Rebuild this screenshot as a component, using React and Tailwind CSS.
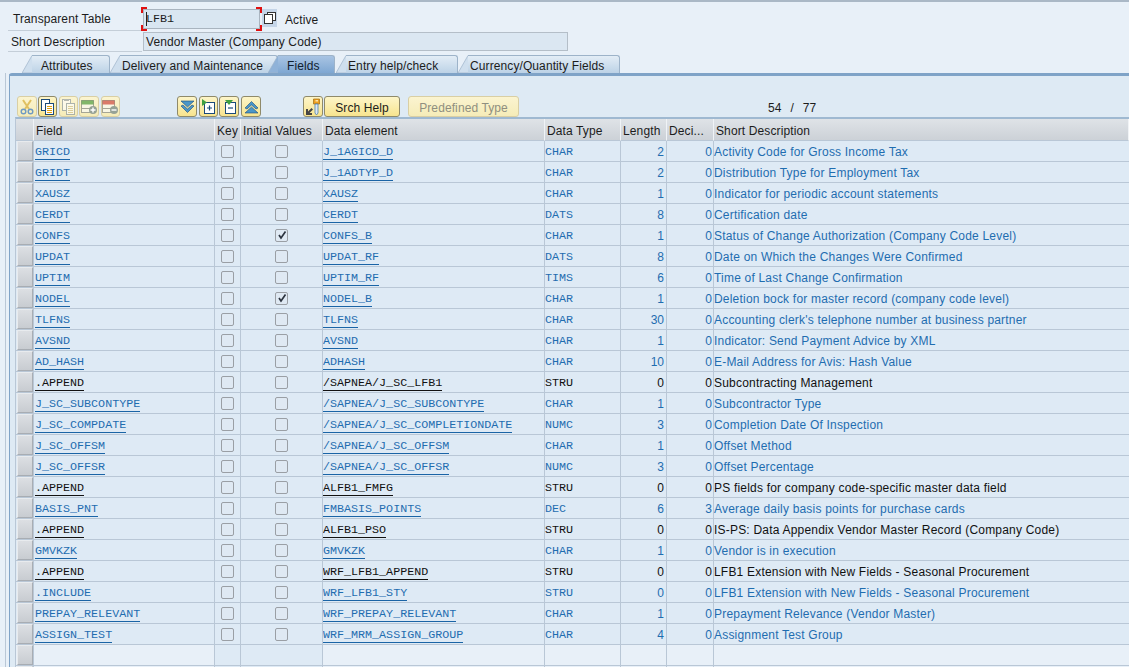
import React from "react";

const rows = [
  ["GRICD","J_1AGICD_D","CHAR","2","0","Activity Code for Gross Income Tax"],
  ["GRIDT","J_1ADTYP_D","CHAR","2","0","Distribution Type for Employment Tax"],
  ["XAUSZ","XAUSZ","CHAR","1","0","Indicator for periodic account statements"],
  ["CERDT","CERDT","DATS","8","0","Certification date"],
  ["CONFS","CONFS_B","CHAR","1","0","Status of Change Authorization (Company Code Level)",0,1],
  ["UPDAT","UPDAT_RF","DATS","8","0","Date on Which the Changes Were Confirmed"],
  ["UPTIM","UPTIM_RF","TIMS","6","0","Time of Last Change Confirmation"],
  ["NODEL","NODEL_B","CHAR","1","0","Deletion bock for master record (company code level)",0,1],
  ["TLFNS","TLFNS","CHAR","30","0","Accounting clerk's telephone number at business partner"],
  ["AVSND","AVSND","CHAR","1","0","Indicator: Send Payment Advice by XML"],
  ["AD_HASH","ADHASH","CHAR","10","0","E-Mail Address for Avis: Hash Value"],
  [".APPEND","/SAPNEA/J_SC_LFB1","STRU","0","0","Subcontracting Management",1],
  ["J_SC_SUBCONTYPE","/SAPNEA/J_SC_SUBCONTYPE","CHAR","1","0","Subcontractor Type"],
  ["J_SC_COMPDATE","/SAPNEA/J_SC_COMPLETIONDATE","NUMC","3","0","Completion Date Of Inspection"],
  ["J_SC_OFFSM","/SAPNEA/J_SC_OFFSM","CHAR","1","0","Offset Method"],
  ["J_SC_OFFSR","/SAPNEA/J_SC_OFFSR","NUMC","3","0","Offset Percentage"],
  [".APPEND","ALFB1_FMFG","STRU","0","0","PS fields for company code-specific master data field",1],
  ["BASIS_PNT","FMBASIS_POINTS","DEC","6","3","Average daily basis points for purchase cards"],
  [".APPEND","ALFB1_PSO","STRU","0","0","IS-PS: Data Appendix Vendor Master Record (Company Code)",1],
  ["GMVKZK","GMVKZK","CHAR","1","0","Vendor is in execution"],
  [".APPEND","WRF_LFB1_APPEND","STRU","0","0","LFB1 Extension with New Fields - Seasonal Procurement",1],
  [".INCLUDE","WRF_LFB1_STY","STRU","0","0","LFB1 Extension with New Fields - Seasonal Procurement",2],
  ["PREPAY_RELEVANT","WRF_PREPAY_RELEVANT","CHAR","1","0","Prepayment Relevance (Vendor Master)"],
  ["ASSIGN_TEST","WRF_MRM_ASSIGN_GROUP","CHAR","4","0","Assignment Test Group"],
];

const mono = "font-['Liberation_Mono',monospace] text-[11.7px] pt-[4px]";
const sansPad = "pt-[2px]";
const cols = "grid grid-cols-[18px_181px_26px_82px_222px_76px_46px_47px_1fr]";
const cell = "border-r border-[#b9c7d6] h-full flex items-center overflow-hidden whitespace-nowrap";

function Check({ on }) {
  return (
    <span className="w-[13px] h-[13px] rounded-[2px] border border-[#9a9fa5] bg-[#dfe9f3] flex items-center justify-center">
      {on ? (
        <svg width="10" height="10" viewBox="0 0 10 10">
          <path d="M2 5 L4 8 L8.5 1.5" fill="none" stroke="#2c3440" strokeWidth="1.7" />
        </svg>
      ) : null}
    </span>
  );
}

function Selector() {
  return (
    <div className="h-full border-r border-[#b9c7d6] pl-px">
      <div className="h-[20px] bg-gradient-to-b from-[#dcdfe3] to-[#c8ccd1] border border-[#e8ebee] border-r-[#a8adb3] border-b-[#a8adb3]" />
    </div>
  );
}

function Row({ r }) {
  const [f, de, t, l, d, s, kind, chk] = r;
  const black = kind === 1;
  const c = black ? "text-[#111]" : "text-[#1f6db0]";
  const u = black ? "border-[#111]" : "border-[#1a64a6]";
  return (
    <div className={`${cols} h-[21px] border-b border-[#b9c7d6] bg-[#deeaf5]`}>
      <Selector />
      <div className={`${cell} pl-px ${mono} ${c}`}>
        <span className={`border-b leading-[13px] ${u}`}>{f}</span>
      </div>
      <div className={`${cell} justify-center`}><Check /></div>
      <div className={`${cell} justify-center`}><Check on={chk} /></div>
      <div className={`${cell} ${mono} ${c}`}>
        <span className={`border-b leading-[13px] ${u}`}>{de}</span>
      </div>
      <div className={`${cell} ${mono} ${c}`}>{t}</div>
      <div className={`${cell} justify-end pr-[2px] ${sansPad} ${c}`}>{l}</div>
      <div className={`${cell} justify-end pr-px ${sansPad} ${c}`}>{d}</div>
      <div className={`h-full flex items-center whitespace-nowrap text-[12px] tracking-[0.2px] ${sansPad} ${c}`}>{s}</div>
    </div>
  );
}

function EmptyRow() {
  return (
    <div className={`${cols} h-[21px] border-b border-[#b9c7d6] bg-[#e8f0f8]`}>
      <Selector />
      <div className={cell} />
      <div className={`${cell} bg-[#deeaf5]`} />
      <div className={`${cell} bg-[#deeaf5]`} />
      <div className={cell} />
      <div className={cell} />
      <div className={cell} />
      <div className={cell} />
      <div />
    </div>
  );
}

function HeadCell({ children }) {
  return (
    <div className="h-full flex items-center pl-[2px] pt-[2px] whitespace-nowrap overflow-hidden text-[12px] tracking-[0.12px] text-[#1c1c1c] bg-gradient-to-b from-[#dfe3e7] to-[#ccd1d7] border-r border-[#f0f3f6] border-b border-b-[#b9c7d6]">
      {children}
    </div>
  );
}

function Slant({ active }) {
  return (
    <svg width="11" height="18" viewBox="0 0 11 18" className="-mr-px shrink-0">
      <path d="M0 18 L10 0.5 L11 0.5 L11 18 Z" fill={active ? "#8fb2d8" : "#cfdfee"} stroke="#9db3c9" strokeWidth="0.7" />
    </svg>
  );
}

function Tab({ label, active, w, ml = "" }) {
  return (
    <div className={`flex items-end h-[18px] ${ml}`}>
      <Slant active={active} />
      <div
        className={`h-[18px] ${w} flex items-center pt-[2px] rounded-tr-[3px] border-t border-r border-[#9db3c9] text-[12px] tracking-[0.1px] ${
          active ? "bg-gradient-to-b from-[#a9c4e3] to-[#7ea7d2] text-[#10202f]" : "bg-gradient-to-b from-[#e3edf6] to-[#bcd2e6] text-[#1c1c1c]"
        }`}
      >
        {label}
      </div>
    </div>
  );
}

function TB({ children, dim, className }) {
  return (
    <div className={`h-[21px] ${className} shrink-0 flex items-center justify-center rounded-[3px] border bg-gradient-to-b text-[12px] tracking-[0.1px] ${dim ? "border-[#d9cfa4] from-[#fbf4d0] to-[#f5ecb8]" : "border-[#8f8a6a] from-[#fdf5c8] to-[#f7e48e]"}`}>
      {children}
    </div>
  );
}

const Doc = ({ stroke = "#1a4a7a", line = "#e0a010", dim }) => (
  <svg width="15" height="16" viewBox="0 0 15 16" opacity={dim ? 0.6 : 1}>
    <rect x="1.5" y="0.5" width="8" height="11" fill="#fff" stroke={stroke} />
    {dim ? <rect x="3" y="0" width="5" height="2" fill="#8a94a0" /> : null}
    <rect x="5.5" y="4.5" width="8" height="11" fill="#fff" stroke={stroke} />
    <path d="M7 7.5h5M7 9.5h5M7 11.5h5M7 13.5h5" stroke={line} />
  </svg>
);

const RowAdd = ({ color, sign }) => (
  <svg width="17" height="16" viewBox="0 0 17 16">
    <rect x="0.5" y="1.5" width="12" height="12" fill="#f8f6e4" stroke="#a5a595" />
    <rect x="0.5" y="1.5" width="12" height="4" fill={color} opacity="0.75" />
    <path d="M1 9.5h8" stroke="#a5a595" />
    <circle cx="12" cy="11" r="4" fill="#96a296" />
    <path d={sign} stroke="#fff" strokeWidth="1.4" />
  </svg>
);

export default function App() {
  return (
    <div className="w-[1129px] h-[667px] overflow-hidden bg-[#e8f0f8] font-['Liberation_Sans',sans-serif] text-[12px] text-[#1c1c1c] border-t-2 border-[#aab8c6] flex flex-col">
      <div className="pl-[8px] pt-[7px] flex flex-col">
        <div className="flex items-start h-[22px]">
          <div className="w-[134px] h-[22px] pl-[5px] pb-[2px] flex items-center border-b border-[#c4ced8] tracking-[0.1px]">Transparent Table</div>
          <div className="relative ml-px w-[117px] h-[20px] pl-[2px] pt-[2px] flex items-center bg-[#d9e6f1] border border-[#a9b4bf] font-['Liberation_Mono',monospace] text-[11.7px]">
            LFB1
            <span className="absolute left-[2px] top-[2px] w-px h-[14px] bg-[#222]" />
            <span className="absolute -left-[3px] -top-[3px] w-[6px] h-[6px] border-l-2 border-t-2 border-[#e01010]" />
            <span className="absolute -right-[3px] -top-[3px] w-[6px] h-[6px] border-r-2 border-t-2 border-[#e01010]" />
            <span className="absolute -left-[3px] -bottom-[3px] w-[6px] h-[6px] border-l-2 border-b-2 border-[#e01010]" />
            <span className="absolute -right-[3px] -bottom-[3px] w-[6px] h-[6px] border-r-2 border-b-2 border-[#e01010]" />
          </div>
          <div className="w-[15px] h-[18px] ml-[2px] bg-[#c5d5e8] flex items-center justify-center">
            <svg width="12" height="12" viewBox="0 0 12 12">
              <rect x="3.5" y="0.5" width="8" height="8" fill="#fff" stroke="#333" />
              <rect x="0.5" y="2.5" width="8" height="9" fill="#fff" stroke="#333" />
            </svg>
          </div>
          <span className="ml-[8px] mt-[2px] tracking-[0.1px]">Active</span>
        </div>
        <div className="flex items-start h-[21px]">
          <div className="w-[134px] h-[21px] pl-[3px] pt-px flex items-center border-b border-[#c4ced8] tracking-[0.1px]">Short Description</div>
          <div className="ml-px mt-px w-[425px] h-[19px] pl-[2px] flex items-center bg-[#dbe7f2] border border-[#b4bec8] tracking-[0.1px]">Vendor Master (Company Code)</div>
        </div>
      </div>

      <div className="flex items-end h-[18px] mt-[3px] pl-[22px]">
        <Tab label="Attributes" w="w-[78px] pl-[9px]" />
        <Tab label="Delivery and Maintenance" w="w-[158px] pl-[2px]" />
        <Tab label="Fields" w="w-[57px] pl-[9px]" ml="-ml-[10px]" active />
        <Tab label="Entry help/check" w="w-[112px] pl-[2px]" ml="ml-px" />
        <Tab label="Currency/Quantity Fields" w="w-[152px] pl-[2px]" />
      </div>

      <div className="ml-[5px] flex-1 border-l border-[#b9c7d6] pl-[3px] min-h-0">
        <div className="h-full rounded-tl-[3px] border-l border-t-[3px] border-[#7fa3c7] bg-[#deeaf4] pl-[5px] flex flex-col">
          <div className="h-[21px] mt-[20px] flex items-center pl-[2px]">
            <TB dim className="w-[20px]">
              <svg width="14" height="16" viewBox="0 0 14 16"><path d="M3 1 L9 10M11 1 L5 10" stroke="#e0c060" strokeWidth="2"/><circle cx="3.5" cy="12.5" r="2.3" fill="none" stroke="#6f9ac2" strokeWidth="1.4"/><circle cx="10.5" cy="12.5" r="2.3" fill="none" stroke="#6f9ac2" strokeWidth="1.4"/></svg>
            </TB>
            <TB className="w-[19px] ml-px"><Doc /></TB>
            <TB dim className="w-[19px] ml-[2px]"><Doc stroke="#7a8a9a" line="#c8b880" dim /></TB>
            <TB dim className="w-[20px] ml-px"><RowAdd color="#5aa040" sign="M9.5 11h5M12 8.5v5" /></TB>
            <TB dim className="w-[19px] ml-[2px]"><RowAdd color="#d05040" sign="M9.5 11h5" /></TB>
            <div className="w-[57px] shrink-0" />
            <TB className="w-[20px]">
              <svg width="15" height="14" viewBox="0 0 15 14"><path d="M1 1h13L7.5 7z" fill="#4a96c8" stroke="#1a4a7a" strokeWidth="0.6"/><path d="M1 6l6.5 6.500L14 6l-2-1-4.500 4L3 5z" fill="#4a96c8" stroke="#1a4a7a" strokeWidth="0.6"/></svg>
            </TB>
            <TB className="w-[19px] ml-[2px]">
              <svg width="15" height="16" viewBox="0 0 15 16"><rect x="3.500" y="3.500" width="10" height="11" fill="#fff" stroke="#1a4a7a"/><path d="M6 9h5M8.500 6.500v5" stroke="#1a4a7a" strokeWidth="1.200"/><path d="M1 0v7l5-3.500z" fill="#3fa040"/></svg>
            </TB>
            <TB className="w-[20px] ml-px">
              <svg width="15" height="16" viewBox="0 0 15 16"><rect x="3.500" y="3.500" width="10" height="11" fill="#fff" stroke="#1a4a7a"/><path d="M6 9h5" stroke="#1a4a7a" strokeWidth="1.200"/><path d="M3 1h8l-4 5z" fill="#3fa040"/></svg>
            </TB>
            <TB className="w-[20px] ml-[2px]">
              <svg width="15" height="14" viewBox="0 0 15 14"><path d="M1 13h13L7.500 7z" fill="#4a96c8" stroke="#1a4a7a" strokeWidth="0.6"/><path d="M1 8l6.500-6.500L14 8l-2 1-4.500-4L3 9z" fill="#4a96c8" stroke="#1a4a7a" strokeWidth="0.6"/></svg>
            </TB>
            <div className="w-[42px] shrink-0" />
            <TB className="w-[20px]">
              <svg width="16" height="18" viewBox="0 0 16 18"><path d="M8.500 1h6v5h-6z" fill="#eea020" stroke="#a06a10" strokeWidth="0.7"/><rect x="10.500" y="2.200" width="2.500" height="1.200" fill="#fff3c8"/><path d="M10 6h3v9l-1.500 2-1.500-2z" fill="#dbe8f4" stroke="#4a7fb0" strokeWidth="0.8"/><path d="M1 17h6v-2H4.500L8 11.500 6.500 10 3 13.500V11H1z" fill="#454545"/></svg>
            </TB>
            <TB className="w-[76px] ml-px pt-[2px]">Srch Help</TB>
            <TB dim className="w-[111px] ml-[8px] pt-[2px]"><span className="text-[#8f8f80]">Predefined Type</span></TB>
            <span className="ml-[249px] mt-[2px] [word-spacing:1.2px]">54&nbsp;&nbsp;/&nbsp;&nbsp;77</span>
          </div>

          <div className="border-t-2 border-[#9fb9d1] border-l border-l-[#b9c7d6]">
            <div className={`${cols} h-[22px]`}>
              <HeadCell />
              <HeadCell>Field</HeadCell>
              <HeadCell>Key</HeadCell>
              <HeadCell>Initial Values</HeadCell>
              <HeadCell>Data element</HeadCell>
              <HeadCell>Data Type</HeadCell>
              <HeadCell>Length</HeadCell>
              <HeadCell>Deci...</HeadCell>
              <HeadCell>Short Description</HeadCell>
            </div>
            {rows.map((r, i) => <Row key={i} r={r} />)}
            <EmptyRow />
            <EmptyRow />
          </div>
        </div>
      </div>
    </div>
  );
}
